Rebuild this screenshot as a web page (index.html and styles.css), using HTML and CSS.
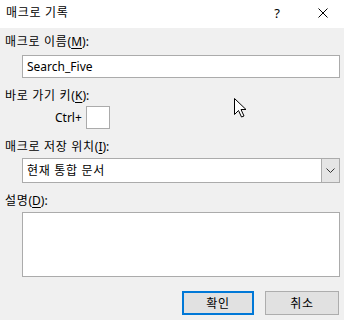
FILE: index.html
```html
<!DOCTYPE html>
<html>
  <head>
    <meta charset="UTF-8">
    <title>매크로 기록</title>
    <link rel="stylesheet" href="styles.css">
  </head>
  <body>
    <div class="dialog">
      <header class="titlebar">
        <span class="title ko">매크로 기록</span>
        <span class="help">?</span>
        <svg class="close" width="10" height="10" viewBox="0 0 10 10">
          <path d="M0.5 0.5 L9.5 9.5 M9.5 0.5 L0.5 9.5" stroke="#000" stroke-width="1" fill="none"/>
        </svg>
      </header>

      <main class="content">
        <label class="label first"><span class="ko">매크로 이름</span>(<u>M</u>):</label>
        <div class="field text-input">Search_Five</div>

        <label class="label gap"><span class="ko">바로 가기 키</span>(<u>K</u>):</label>
        <div class="shortcut">
          <span>Ctrl+</span>
          <div class="field key-box"></div>
        </div>

        <label class="label gap"><span class="ko">매크로 저장 위치</span>(<u>I</u>):</label>
        <div class="field select">
          <span class="select-value ko">현재 통합 문서</span>
          <span class="select-btn">
            <svg width="9" height="5" viewBox="0 0 9 5">
              <path d="M0.5 0.5 L4.5 4.5 L8.5 0.5" stroke="#333" stroke-width="1" fill="none"/>
            </svg>
          </span>
        </div>

        <label class="label gap"><span class="ko">설명</span>(<u>D</u>):</label>
        <div class="field textarea"></div>

        <div class="buttons">
          <button class="btn default ko">확인</button>
          <button class="btn ko">취소</button>
        </div>
      </main>

      <!-- mouse pointer -->
      <svg class="cursor" width="13" height="20" viewBox="0 0 13 20">
        <path d="M0.5 0.5 L0.5 16.5 L4.5 12.5 L7.5 19 L10 18 L7 11.5 L12 11.5 Z" fill="#fff" stroke="#000" stroke-width="1"/>
      </svg>
    </div>
  </body>
</html>
```

FILE: styles.css
```css
html * {
  box-sizing: border-box;
}

body {
  margin: 0;
  background: #f0f0f0;
  font-family: "Noto Sans", "Noto Sans CJK KR", sans-serif;
  font-size: 12px;
  color: #000;
}

.ko {
  letter-spacing: 0.7px;
}

.dialog {
  position: relative;
  width: 344px;
  height: 320px;
}

.titlebar {
  display: flex;
  align-items: center;
  height: 28px;
  background: #fff;
  padding-left: 6px;
}

.title {
  flex: 1;
  line-height: 16px;
  margin-top: -2px;
}

.help {
  font-size: 13px;
  margin-right: 38px;
  margin-top: -2px;
}

.close {
  margin-right: 16px;
  margin-top: -2px;
}

.content {
  display: flex;
  flex-direction: column;
  padding: 0 4px 0 5px;
}

.label {
  line-height: 16px;
}

.label u {
  text-decoration-thickness: 1px;
  text-underline-offset: 2px;
}

.first {
  margin-top: 6px;
}

.gap {
  margin-top: 10px;
}

.field {
  background: #fff;
  border: 1px solid #ababab;
}

.text-input {
  margin: 5px 0 0 17px;
  height: 23px;
  line-height: 21px;
  padding-left: 4px;
}

.shortcut {
  display: flex;
  align-items: center;
  margin: 2px 0 0 50px;
}

.key-box {
  width: 24px;
  height: 23px;
  margin-left: 4px;
}

.select {
  display: flex;
  margin: 3px 0 0 17px;
  height: 25px;
}

.select-value {
  flex: 1;
  line-height: 23px;
  padding-left: 4px;
}

.select-btn {
  display: flex;
  align-items: center;
  justify-content: center;
  width: 18px;
  background: #e5e5e5;
  border-left: 1px solid #ababab;
}

.textarea {
  margin: 3px 0 0 17px;
  height: 65px;
}

.buttons {
  display: flex;
  justify-content: flex-end;
  gap: 11px;
  margin-top: 14px;
  margin-right: 1px;
}

.btn {
  width: 74px;
  height: 24px;
  background: #e1e1e1;
  border: 1px solid #adadad;
  font-family: inherit;
  font-size: 12px;
  color: #000;
  padding: 0;
}

.default {
  width: 72px;
  border: 2px solid #0078d7;
}

.cursor {
  position: absolute;
  left: 234px;
  top: 98px;
}
```
